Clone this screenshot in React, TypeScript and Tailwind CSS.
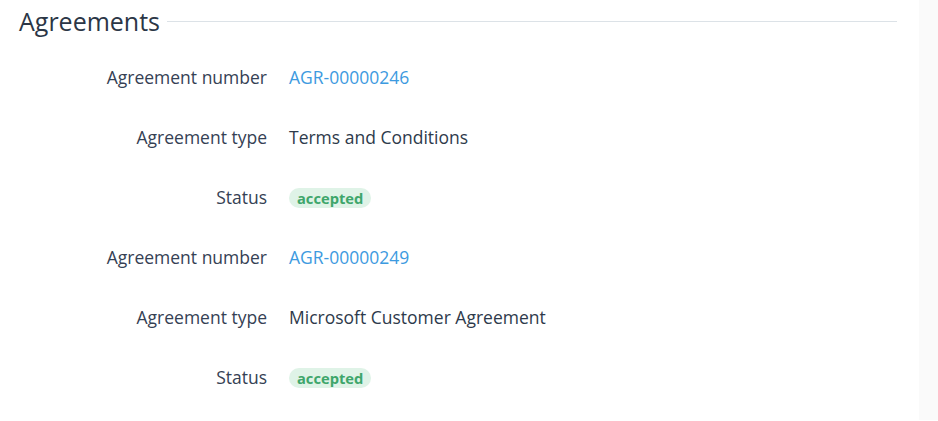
import React from "react";

const rows: { label: string; value: string; kind: "link" | "text" | "badge" }[] = [
  { label: "Agreement number", value: "AGR-00000246", kind: "link" },
  { label: "Agreement type", value: "Terms and Conditions", kind: "text" },
  { label: "Status", value: "accepted", kind: "badge" },
  { label: "Agreement number", value: "AGR-00000249", kind: "link" },
  { label: "Agreement type", value: "Microsoft Customer Agreement", kind: "text" },
  { label: "Status", value: "accepted", kind: "badge" },
];

export default function App() {
  return (
    <div
      className="flex w-[938px] h-[421px] bg-white text-[#2e3a4b]"
      style={{ fontFamily: '"Open Sans", "Noto Sans", sans-serif' }}
    >
      <div className="flex-1 pl-[19px] pr-[22px] pt-[4px]">
        <div className="flex items-center gap-[7px]">
          <h2 className="text-[25px] leading-[35px] font-normal text-[#2b3646]">Agreements</h2>
          <div className="flex-1 h-px bg-[#dce2e7] mt-[-1px]" />
        </div>
        <div className="mt-[8px] flex flex-col">
          {rows.map((r, i) => (
            <div key={i} className="flex items-center h-[60px] gap-[22px]">
              <div className="w-[248px] text-right text-[17.5px] leading-6 text-[#354154]">{r.label}</div>
              <div className="text-[17.5px] leading-6">
                {r.kind === "link" && <a className="text-[#3d9ae0] cursor-pointer">{r.value}</a>}
                {r.kind === "text" && <span className="text-[#2e3a4b]">{r.value}</span>}
                {r.kind === "badge" && (
                  <span className="inline-flex items-center h-[20px] px-2 rounded-full bg-[#dff3e7] text-[#3ea66b] text-[14.7px] font-bold leading-none">
                    {r.value}
                  </span>
                )}
              </div>
            </div>
          ))}
        </div>
      </div>
      <div className="w-[19px] h-[420px] bg-[#fafafa]" />
    </div>
  );
}
